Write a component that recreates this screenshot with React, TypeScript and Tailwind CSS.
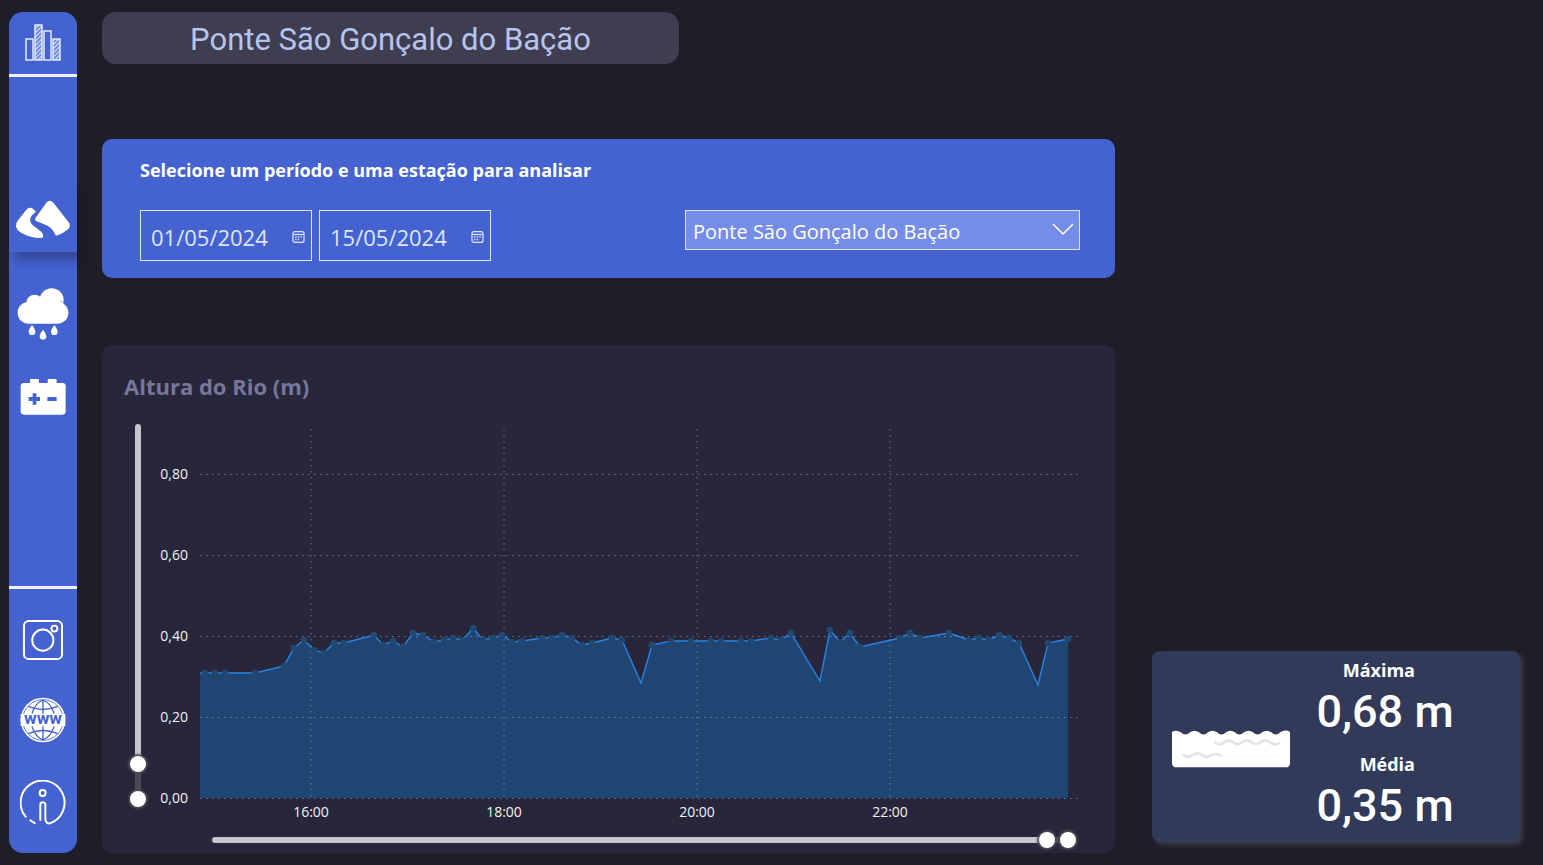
import { useState } from "react";

type Point = [x: number, y: number, marker?: boolean];

const BASELINE = 382;

const RIVER: Point[] = [
  [50, 257, false], [55, 257], [65, 257], [75, 257], [105, 257], [134, 250], [144, 232], [154, 224],
  [164, 234], [174, 237], [184, 227], [194, 227], [224, 219], [233, 229], [243, 225], [253, 231],
  [263, 217], [273, 219], [284, 226], [294, 224], [303, 222], [313, 224], [323, 212], [333, 224],
  [343, 222], [352, 219], [362, 226], [372, 225], [392, 222], [402, 222], [412, 219], [422, 222],
  [432, 229], [442, 227], [462, 222], [472, 224], [491, 267, false], [502, 229], [521, 225],
  [541, 225], [561, 225], [571, 225], [591, 225], [601, 225], [621, 222], [631, 224], [641, 217],
  [670, 265, false], [680, 214], [690, 226], [700, 217], [710, 231], [750, 222], [760, 217],
  [770, 222], [799, 217], [819, 224], [829, 222], [839, 224], [849, 219], [859, 222], [869, 227],
  [888, 269, false], [898, 227], [918, 223],
];

const Y_TICKS = [
  { label: "0,80", y: 58 },
  { label: "0,60", y: 139 },
  { label: "0,40", y: 220 },
  { label: "0,20", y: 301 },
  { label: "0,00", y: 382 },
];

const X_TICKS = [
  { label: "16:00", x: 161 },
  { label: "18:00", x: 354 },
  { label: "20:00", x: 547 },
  { label: "22:00", x: 740 },
];

const THUMB =
  "[&::-webkit-slider-thumb]:pointer-events-auto [&::-webkit-slider-thumb]:size-4 [&::-webkit-slider-thumb]:appearance-none [&::-webkit-slider-thumb]:rounded-full [&::-webkit-slider-thumb]:bg-white [&::-webkit-slider-thumb]:shadow-[0_0_2px_2px_#4b4a52]";

function BarsIcon() {
  return (
    <svg viewBox="0 0 37 39" className="w-[37px]" fill="none" stroke="#e4ebff" strokeWidth="1.5" aria-hidden="true">
      <defs>
        <pattern id="hatch" width="3" height="3" patternUnits="userSpaceOnUse" patternTransform="rotate(-45)">
          <path d="M0 1.5h3" stroke="#e4ebff" strokeWidth="1.5" />
        </pattern>
      </defs>
      <rect x="1" y="15" width="7" height="21" />
      <rect x="10" y="1" width="7" height="35" fill="url(#hatch)" />
      <rect x="19" y="7" width="7" height="29" />
      <rect x="28" y="15" width="7" height="21" fill="url(#hatch)" />
    </svg>
  );
}

function RiverIcon() {
  return (
    <svg viewBox="45 60 168 117" className="w-14" fill="#fff" aria-hidden="true">
      <path d="M81 87Q90 80 99 86L108 95Q96 103 91 114Q88 128 100 137L124 155Q131 161 129 170Q128 174 122 174Q90 174 66 160Q50 152 48 138Q47 130 54 121Z" />
      <path d="M140 67Q149 58 159 67L207 128Q213 138 205 147Q190 160 173 166Q167 168 165 163Q158 146 140 136L108 123Q103 120 107 113Z" />
    </svg>
  );
}

function RainIcon() {
  return (
    <svg viewBox="51 323 156 156" className="w-[52px]" fill="#fff" aria-hidden="true">
      <rect x="53" y="365" width="152" height="65" rx="32" />
      <circle cx="104" cy="368" r="25" />
      <circle cx="155" cy="360" r="36" />
      <rect x="90" y="355" width="80" height="50" />
      <path d="M96 434C102 443 106 449 106 454A10 10 0 0 1 86 454C86 449 90 443 96 434Z" />
      <path d="M129 448C135 457 139 463 139 468A10 10 0 0 1 119 468C119 463 123 457 129 448Z" />
      <path d="M163 434C169 443 173 449 173 454A10 10 0 0 1 153 454C153 449 157 443 163 434Z" />
      <path d="M180 362Q190 364 195 370" stroke="#4463d1" strokeWidth="1.5" fill="none" />
    </svg>
  );
}

function BatteryIcon() {
  return (
    <svg viewBox="59 588 138 120" className="w-[46px]" fill="#fff" aria-hidden="true">
      <rect x="61" y="609" width="135" height="95" rx="10" />
      <rect x="89" y="597" width="27" height="16" rx="3" />
      <rect x="142" y="597" width="27" height="16" rx="3" />
      <path d="M97 640h11v11h11v12h-11v11h-11v-11h-12v-12h12ZM141 651h28v12h-28Z" fill="#4463d1" />
    </svg>
  );
}

function CameraIcon() {
  return (
    <svg viewBox="70 150 121 121" className="w-10" fill="none" stroke="#fff" strokeWidth="6" aria-hidden="true">
      <rect x="73" y="153" width="115" height="115" rx="14" />
      <circle cx="130" cy="211" r="32" />
      <circle cx="165" cy="176" r="9" />
    </svg>
  );
}

function GlobeIcon() {
  return (
    <svg viewBox="60 382 138 138" className="w-[46px]" aria-hidden="true">
      <circle cx="129" cy="451" r="67" fill="#fff" />
      <g fill="none" stroke="#4463d1" strokeWidth="4">
        <circle cx="129" cy="451" r="61" strokeWidth="2.5" />
        <path d="M129 392v40M129 470v40" />
        <path d="M96 432Q104 402 129 391Q154 402 162 432M96 470Q104 500 129 511Q154 500 162 470" />
        <path d="M85 410Q129 429 173 410M85 492Q129 473 173 492" />
      </g>
      <rect x="62" y="433" width="134" height="36" fill="#fff" />
      <text x="129" y="464" textAnchor="middle" fontSize="52" fill="#4463d1" className="font-['Roboto',sans-serif] font-bold">
        www
      </text>
    </svg>
  );
}

function InfoIcon() {
  return (
    <svg viewBox="60 626 138 138" className="w-[46px]" fill="none" stroke="#fff" strokeWidth="6" strokeLinecap="round" aria-hidden="true">
      <path d="M77 736A66 66 0 1 1 150 756Q137 758 136 742V700A7 7 0 0 0 121 700V746" />
      <path d="M91 747Q97 752 104 755" />
      <circle cx="128" cy="665" r="9" />
    </svg>
  );
}

function CalendarIcon() {
  return (
    <svg viewBox="0 0 13 12" className="w-[13px]" fill="none" stroke="#dfe6ff" aria-hidden="true">
      <rect x="1" y="0.6" width="11" height="10.8" rx="2" strokeWidth="1.2" />
      <path d="M1 3.5h11" strokeWidth="1.2" />
      <path d="M3.2 6h1.4M5.8 6h1.4M8.4 6h1.4M3.2 8.5h1.4M5.8 8.5h1.4" strokeWidth="1.4" />
    </svg>
  );
}

function WaterIcon() {
  return (
    <svg viewBox="96 274 354 114" className="mt-2 w-[118px] shrink-0" aria-hidden="true">
      <path
        d="M96 280Q109 272 122 281Q137 294 150 281Q163 271 177 281Q190 294 204 281Q217 271 231 281Q245 294 258 281Q271 271 285 281Q298 294 312 281Q326 271 339 281Q353 294 366 281Q380 271 394 281Q407 294 421 281Q435 271 450 280V372Q450 386 436 386H110Q96 386 96 372Z"
        fill="#fff"
      />
      <g fill="none" stroke="#e4e4e6" strokeWidth="8" strokeLinecap="round">
        <path d="M226 311Q238 323 250 312Q266 300 280 311Q293 322 306 311Q321 300 335 311Q348 322 361 311Q376 300 390 311Q404 322 418 313" />
        <path d="M131 349Q144 360 158 349Q172 339 186 349Q199 360 212 350Q226 342 241 350" />
      </g>
    </svg>
  );
}

function DateField({ label, initial }: { label: string; initial: string }) {
  const [value, setValue] = useState(initial);
  return (
    <div className="flex h-[51px] w-[172px] items-center justify-between border border-[#dfe6ff] pt-[3px] pr-[6px] pl-[10px]">
      <input
        aria-label={label}
        value={value}
        onChange={(e) => setValue(e.target.value)}
        className="w-[125px] bg-transparent text-[22px] text-[#dfe6ff] outline-none"
      />
      <button type="button" aria-label={`Abrir calendário: ${label}`}>
        <CalendarIcon />
      </button>
    </div>
  );
}

function VerticalRange() {
  const [low, setLow] = useState(0);
  const [high, setHigh] = useState(93);
  const input = `pointer-events-none absolute inset-0 m-0 h-full w-4 appearance-none bg-transparent [direction:rtl] [writing-mode:vertical-lr] ${THUMB}`;
  return (
    <div className="relative w-4 py-2">
      <div className="relative mx-auto h-full w-[6px] rounded-full bg-[#c6c5cb]">
        <div className="absolute w-full bg-[#4b4a52]" style={{ bottom: `${low / 10}%`, height: `${(high - low) / 10}%` }} />
      </div>
      <input type="range" aria-label="Altura mínima" min={0} max={1000} value={low} onChange={(e) => setLow(Math.min(+e.target.value, high))} className={input} />
      <input type="range" aria-label="Altura máxima" min={0} max={1000} value={high} onChange={(e) => setHigh(Math.max(+e.target.value, low))} className={input} />
    </div>
  );
}

function HorizontalRange() {
  const [start, setStart] = useState(975);
  const [end, setEnd] = useState(1000);
  const input = `pointer-events-none absolute inset-0 m-0 h-4 w-full appearance-none bg-transparent ${THUMB}`;
  return (
    <div className="relative flex h-4 items-center px-2">
      <div className="relative h-[6px] w-full rounded-full bg-[#c6c5cb]">
        <div className="absolute h-full bg-[#4b4a52]" style={{ left: `${start / 10}%`, width: `${(end - start) / 10}%` }} />
      </div>
      <input type="range" aria-label="Início do período" min={0} max={1000} value={start} onChange={(e) => setStart(Math.min(+e.target.value, end))} className={input} />
      <input type="range" aria-label="Fim do período" min={0} max={1000} value={end} onChange={(e) => setEnd(Math.max(+e.target.value, start))} className={input} />
    </div>
  );
}

function RiverChart() {
  const line = RIVER.map(([x, y]) => `${x} ${y}`).join("L");
  return (
    <svg viewBox="0 0 935 408" className="block w-full" role="img" aria-label="Altura do Rio (m)">
      <path d={`M50 ${BASELINE}L${line}V${BASELINE}Z`} fill="#204573" />
      <g stroke="#a5a8b8" strokeOpacity="0.6" strokeDasharray="1.5 4.5">
        {Y_TICKS.map((t) => (
          <path key={t.label} d={`M50 ${t.y}.5H930`} />
        ))}
        {X_TICKS.map((t) => (
          <path key={t.label} d={`M${t.x} 13V382`} />
        ))}
      </g>
      <path d={`M${line}`} fill="none" stroke="#2684e6" strokeWidth="1.4" />
      {RIVER.filter((p) => p[2] !== false).map(([x, y]) => (
        <circle key={x} cx={x} cy={y} r="3.3" fill="#21496f" />
      ))}
      <g fill="#f1f1f4" fontSize="14">
        {Y_TICKS.map((t) => (
          <text key={t.label} x="38" y={t.y + 5} textAnchor="end">{t.label}</text>
        ))}
        {X_TICKS.map((t) => (
          <text key={t.label} x={t.x} y="401" textAnchor="middle">{t.label}</text>
        ))}
      </g>
    </svg>
  );
}

function Stat({ label, value }: { label: string; value: string }) {
  return (
    <div>
      <dt className="pr-[65px] text-right text-[18px] leading-7 font-bold">{label}</dt>
      <dd className="text-center font-['Roboto',sans-serif] text-[45px] leading-14 font-medium">{value}</dd>
    </div>
  );
}

export default function App() {
  return (
    <div className="flex min-h-screen bg-[#1f1d28] py-3 pr-[23px] pl-[9px] font-['Open_Sans','Noto_Sans',sans-serif] text-white">
      <aside className="flex w-[68px] shrink-0 flex-col rounded-[14px] bg-[#4463d1]">
        <a href="#inicio" aria-label="Início" className="flex h-[65px] items-center justify-center border-b-3 border-[#eef2ff]">
          <BarsIcon />
        </a>
        <nav aria-label="Painéis" className="flex flex-1 flex-col items-center gap-9 pt-[109px]">
          <a href="#rio" aria-label="Altura do rio" aria-current="page" className="flex h-[66px] w-full items-center justify-center bg-[#4463d1] shadow-[6px_8px_10px_rgba(20,20,40,0.35)]">
            <RiverIcon />
          </a>
          <a href="#chuva" aria-label="Chuva"><RainIcon /></a>
          <a href="#bateria" aria-label="Bateria"><BatteryIcon /></a>
        </nav>
        <nav aria-label="Contatos" className="flex flex-col items-center gap-[37px] border-t-3 border-[#eef2ff] pt-[31px] pb-[27px]">
          <a href="#instagram" aria-label="Instagram"><CameraIcon /></a>
          <a href="#site" aria-label="Site"><GlobeIcon /></a>
          <a href="#sobre" aria-label="Sobre"><InfoIcon /></a>
        </nav>
      </aside>

      <main className="ml-[25px] flex min-w-0 flex-1 flex-col">
        <h1 className="flex h-[52px] w-[577px] max-w-full items-center justify-center rounded-[14px] bg-[#3f3d50] pt-1 font-['Roboto',sans-serif] text-[31px] text-[#b5c4ee]">
          Ponte São Gonçalo do Bação
        </h1>

        <section className="mt-[75px] rounded-[10px] bg-[#4463d1] pt-[19px] pr-[35px] pb-[17px] pl-[38px]">
          <h2 className="text-[18px] leading-6 font-bold">Selecione um período e uma estação para analisar</h2>
          <div className="mt-7 flex items-start justify-between">
            <div className="flex gap-[7px]">
              <DateField label="Data inicial" initial="01/05/2024" />
              <DateField label="Data final" initial="15/05/2024" />
            </div>
            <div className="relative w-[395px]">
              <select aria-label="Estação" className="h-10 w-full appearance-none border border-[#dfe6ff] bg-[#758de6] pt-1 pr-10 pl-[7px] text-[20px] text-white outline-none">
                <option>Ponte São Gonçalo do Bação</option>
              </select>
              <svg viewBox="0 0 22 12" className="pointer-events-none absolute top-[13px] right-[6px] w-[22px]" fill="none" stroke="#fff" strokeWidth="1.5" aria-hidden="true">
                <path d="M1 1L11 11L21 1" />
              </svg>
            </div>
          </div>
        </section>

        <section className="mt-[67px] rounded-[10px] bg-[#28263a] pt-[25px] pr-[30px] pb-[5px] pl-[22px]">
          <h2 className="text-[22px] leading-8 font-bold text-[#77779b]">Altura do Rio (m)</h2>
          <div className="mt-[14px] flex gap-1 pl-[6px]">
            <div className="flex pb-[17px]">
              <VerticalRange />
            </div>
            <div className="min-w-0 flex-1">
              <RiverChart />
            </div>
          </div>
          <div className="mt-2 mr-[9px] ml-20">
            <HorizontalRange />
          </div>
        </section>
      </main>

      <section aria-label="Resumo" className="mb-[11px] ml-[37px] flex w-[368px] shrink-0 items-center self-end rounded-[8px] bg-[#323a5a] pt-[5px] pr-10 pb-2 pl-5 shadow-[3px_3px_5px_#3d3b48]">
        <WaterIcon />
        <dl className="flex flex-1 flex-col gap-[10px]">
          <Stat label="Máxima" value="0,68 m" />
          <Stat label="Média" value="0,35 m" />
        </dl>
      </section>
    </div>
  );
}
